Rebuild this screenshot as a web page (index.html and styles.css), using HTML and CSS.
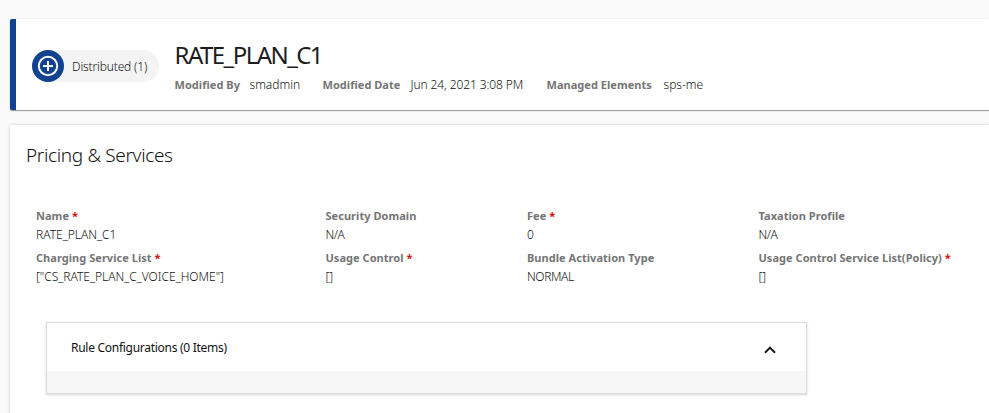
FILE: index.html
```html
<!DOCTYPE html>
<html lang="en">
<head>
<meta charset="utf-8">
<title>RATE_PLAN_C1</title>
<link rel="stylesheet" href="styles.css">
</head>
<body>
<main class="page">
  <header class="summary">
    <div class="status">
      <svg class="status-icon" viewBox="0 0 32 32" width="32" height="32" aria-hidden="true">
        <circle cx="16" cy="16" r="16" fill="#124191"/>
        <circle cx="16" cy="16" r="9.2" fill="none" stroke="#fff" stroke-width="2"/>
        <path d="M16 11v10M11 16h10" stroke="#fff" stroke-width="2"/>
      </svg>
      <span class="status-text">Distributed (1)</span>
    </div>
    <div class="summary-body">
      <h1 class="title">RATE_PLAN_C1</h1>
      <dl class="meta">
        <div class="meta-item by"><dt class="label">Modified By</dt><dd class="value">smadmin</dd></div>
        <div class="meta-item date"><dt class="label">Modified Date</dt><dd class="value">Jun 24, 2021 3:08 PM</dd></div>
        <div class="meta-item managed"><dt class="label">Managed Elements</dt><dd class="value">sps-me</dd></div>
      </dl>
    </div>
  </header>
  <section class="panel">
    <h2 class="panel-title">Pricing &amp; Services</h2>
    <dl class="fields">
      <div class="field"><dt class="label">Name <span class="req">*</span></dt><dd class="value">RATE_PLAN_C1</dd></div>
      <div class="field"><dt class="label">Security Domain</dt><dd class="value caps">N/A</dd></div>
      <div class="field"><dt class="label">Fee <span class="req">*</span></dt><dd class="value">0</dd></div>
      <div class="field"><dt class="label">Taxation Profile</dt><dd class="value caps">N/A</dd></div>
      <div class="field"><dt class="label">Charging Service List <span class="req">*</span></dt><dd class="value">["CS_RATE_PLAN_C_VOICE_HOME"]</dd></div>
      <div class="field"><dt class="label">Usage Control <span class="req">*</span></dt><dd class="value">[]</dd></div>
      <div class="field"><dt class="label">Bundle Activation Type</dt><dd class="value caps">NORMAL</dd></div>
      <div class="field"><dt class="label">Usage Control Service List(Policy) <span class="req">*</span></dt><dd class="value">[]</dd></div>
    </dl>
    <div class="accordion">
      <div class="accordion-head">
        <span class="accordion-title">Rule Configurations (0 Items)</span>
        <svg class="chevron" viewBox="0 0 14 10" width="14" height="10" aria-hidden="true"><path d="M2 7.8L7 2.6l5 5.2" fill="none" stroke="#101820" stroke-width="2"/></svg>
      </div>
      <div class="accordion-body"></div>
    </div>
  </section>
</main>
</body>
</html>
```
FILE: styles.css
```css
* { box-sizing: border-box; }
body {
  margin: 0;
  background: #fafafa;
  color: #111;
  font: 300 12px/18px "Noto Sans", "Open Sans", sans-serif;
  overflow: hidden;
}
h1, h2, dl, dd { margin: 0; }
.page { height: 413px; padding: 19px 0 0 10px; }
.summary {
  display: flex;
  height: 91px;
  background: #fff;
  border-left: 6px solid #124191;
  border-radius: 2px 0 0 2px;
  box-shadow: 0 1px 1px rgba(0, 0, 0, .4), 0 0 2px rgba(0, 0, 0, .12);
}
.status {
  display: flex;
  align-items: center;
  width: 127px;
  height: 32px;
  margin: 31px 0 0 16px;
  background: #f4f4f4;
  border-radius: 16px;
}
.status-icon { flex: none; }
.status-text { margin: 2px 0 0 8px; white-space: nowrap; letter-spacing: -.15px; }
.summary-body { margin: 20px 0 0 15.5px; white-space: nowrap; }
.title { font-size: 24px; line-height: 32px; font-weight: 400; letter-spacing: -1.55px; color: #1c1c1c; }
.meta { display: flex; margin-top: 5px; }
.meta-item { display: flex; }
.meta-item .label { flex: none; }
.by { width: 148px; }
.by .label { width: 75px; }
.date { width: 224px; }
.date .label { width: 88px; }
.managed .label { width: 117px; }
.date .value { letter-spacing: -.1px; }
.label { font-size: 11px; font-weight: 700; letter-spacing: .04px; color: #757575; white-space: nowrap; }
.req { color: #d9070a; }
.value { white-space: nowrap; }
.caps { letter-spacing: -.4px; }
.panel {
  height: 300px;
  margin-top: 15px;
  padding: 17px 0 0 16px;
  background: #fff;
  box-shadow: 0 0 3px rgba(0, 0, 0, .2);
}
.panel-title { font-size: 19px; line-height: 26px; font-weight: 300; letter-spacing: -.35px; }
.fields {
  display: grid;
  grid-template-columns: 289.5px 201.5px 231.5px 1fr;
  grid-auto-rows: 42px;
  margin: 39px 0 0 10px;
}
.field .value { line-height: 19px; }
.accordion {
  width: 761px;
  height: 72px;
  margin: 31px 0 0 20px;
  border: 1px solid #dcdcdc;
  box-shadow: 0 1px 2px rgba(0, 0, 0, .16);
}
.accordion-head {
  display: flex;
  align-items: center;
  justify-content: space-between;
  height: 48px;
  padding: 2px 29px 0 24px;
}
.accordion-title { font-weight: 400; letter-spacing: -.28px; }
.chevron { margin-top: 3px; }
.accordion-body { height: 22px; background: #f7f7f7; }
```
